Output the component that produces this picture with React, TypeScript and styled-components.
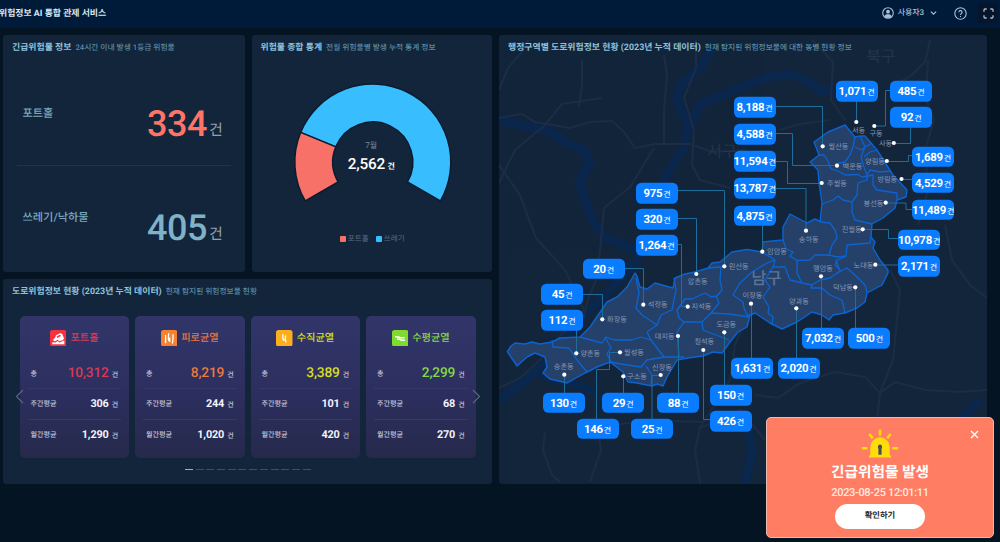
import React from "react";
import styled, { createGlobalStyle } from "styled-components";

const GlobalStyle = createGlobalStyle`
  * { box-sizing: border-box; }
  html, body { margin: 0; padding: 0; background: #051423; overflow: hidden; }
  body, button { font-family: Roboto, "Noto Sans CJK KR", sans-serif; text-rendering: geometricPrecision; }
`;

const Page = styled.div`
  width: 1000px;
  height: 542px;
  display: flex;
  flex-direction: column;
  background: #051423;
  color: #fff;
`;

const Header = styled.header`
  height: 28px;
  flex: none;
  display: flex;
  align-items: center;
  justify-content: space-between;
  background: #001b3a;
  padding: 0 2px 2px 0;
`;

const Brand = styled.h1`
  margin: 2px 0 0 -1px;
  font-size: 8.9px;
  line-height: 12px;
  font-weight: 700;
  white-space: nowrap;
  color: #dbe8f5;
`;

const HeaderTools = styled.div`
  display: flex;
  align-items: center;
  color: #a9bfd6;
`;

const UserMenu = styled.div`
  display: flex;
  align-items: center;
  gap: 4px;
  font-size: 8px;
  line-height: 12px;
  letter-spacing: -0.1px;
  font-weight: 500;
  margin-right: 17px;
`;

const UserName = styled.span`
  margin-right: 2px;
`;

const FullscreenButton = styled.span`
  display: flex;
  align-items: center;
  justify-content: center;
  width: 20px;
  height: 20px;
  margin-left: 11px;
  background: #06152a;
  border-radius: 2px;
`;

const Main = styled.main`
  display: grid;
  grid-template-columns: 489px 488px;
  column-gap: 7px;
  padding: 7px 0 0 3px;
  height: 456px;
`;

const LeftColumn = styled.div`
  display: grid;
  grid-template-rows: 237px 205px;
  row-gap: 7px;
`;

const TopRow = styled.div`
  display: grid;
  grid-template-columns: 242px 240.5px;
  column-gap: 6.5px;
`;

const Panel = styled.section`
  position: relative;
  height: 100%;
  display: flex;
  flex-direction: column;
  background: #12253a;
  border-radius: 3px;
  overflow: hidden;
`;

const PanelHead = styled.div`
  position: relative;
  display: flex;
  align-items: center;
  gap: 4px;
  padding: 6px 0 0 9px;
  height: 19px;
  flex: none;
  white-space: nowrap;
`;

const PanelTitle = styled.h2`
  margin: 0;
  font-size: 8.9px;
  line-height: 12px;
  font-weight: 700;
  color: #8fc2dc;
`;

const PanelNote = styled.span`
  font-size: 7.75px;
  line-height: 12px;
  font-weight: 500;
  color: #5a8ca5;
`;

const HazardBlock = styled.div<{ $height: number; $divided?: boolean }>`
  display: flex;
  justify-content: space-between;
  height: ${(p) => p.$height}px;
  margin: 0 14px;
  padding: 0 8.5px 0 5.5px;
  border-bottom: ${(p) => (p.$divided ? "1px solid #1f3154" : "0")};
`;

const HazardName = styled.span<{ $top: number }>`
  margin-top: ${(p) => p.$top}px;
  font-size: 11.2px;
  line-height: 16px;
  font-weight: 500;
  color: #7aa9c0;
`;

const HazardValue = styled.span<{ $color: string; $top: number }>`
  margin-top: ${(p) => p.$top}px;
  font-size: 36px;
  line-height: 40px;
  letter-spacing: -0.4px;
  font-weight: 500;
  color: ${(p) => p.$color};
`;

const HazardUnit = styled.small`
  position: relative;
  top: -1px;
  margin-left: 2px;
  font-size: 15px;
  font-weight: 400;
  color: #929fae;
`;

const ChartBox = styled.div`
  position: relative;
  height: 134px;
  margin-top: 20px;
  display: flex;
  justify-content: center;
`;

const ChartCenter = styled.div`
  position: absolute;
  left: 0;
  right: 1px;
  top: 66px;
  text-align: center;
  font-size: 8px;
  line-height: 12px;
  color: #7c8ea2;
`;

const ChartTotal = styled.div`
  font-size: 15.3px;
  line-height: 25px;
  letter-spacing: -0.15px;
  font-weight: 500;
  color: #fff;
`;

const ChartUnit = styled.small`
  margin-left: 2.5px;
  font-size: 8px;
  font-weight: 700;
`;

const Legend = styled.div`
  display: flex;
  justify-content: center;
  gap: 7px;
  margin: 25px 0 0 1px;
`;

const LegendItem = styled.span<{ $color: string }>`
  display: flex;
  align-items: center;
  gap: 2px;
  font-size: 7.6px;
  line-height: 12px;
  color: #5a6d83;
  &::before {
    content: "";
    width: 6px;
    height: 6px;
    border-radius: 1px;
    background: ${(p) => p.$color};
  }
`;

const Carousel = styled.div`
  position: relative;
  display: grid;
  grid-template-columns: repeat(4, 109.5px);
  column-gap: 6px;
  margin: 18px 0 0 16.5px;
`;

const StatCard = styled.article`
  height: 142px;
  padding: 14px 8px 0;
  border-radius: 5px;
  background: linear-gradient(#313569, #2c2f5e 55%, #26294b);
`;

const StatHead = styled.div<{ $color: string }>`
  display: flex;
  align-items: center;
  justify-content: center;
  gap: 4px;
  height: 16px;
  margin-bottom: 13px;
  font-size: 10.2px;
  line-height: 16px;
  font-weight: 500;
  color: ${(p) => p.$color};
`;

const StatName = styled.span`
  margin-top: 2px;
`;

const StatRow = styled.div`
  display: flex;
  align-items: center;
  justify-content: space-between;
  height: 30.4px;
  padding: 0 3px;
  border-bottom: 1px solid #36396a;
  font-size: 7.1px;
  color: #c3c6da;
  font-weight: 500;
  &:last-child {
    border-bottom: 0;
  }
`;

const StatValue = styled.span<{ $color?: string }>`
  margin-top: 1px;
  font-size: ${(p) => (p.$color ? 13.7 : 10.9)}px;
  line-height: 16px;
  letter-spacing: -0.15px;
  font-weight: ${(p) => (p.$color ? 500 : 700)};
  color: ${(p) => p.$color ?? "#f2f4fb"};
`;

const StatUnit = styled.small`
  margin-left: 3px;
  font-size: 7px;
  font-weight: 500;
  color: #c3c6da;
`;

const Arrow = styled.span<{ $side: "left" | "right" }>`
  position: absolute;
  top: 73px;
  ${(p) => (p.$side === "left" ? "left: -5px;" : "left: 452px;")}
  display: flex;
`;

const Pager = styled.div`
  display: flex;
  gap: 2.7px;
  margin: 10.5px 0 0 182px;
`;

const PagerBar = styled.span<{ $active?: boolean }>`
  width: 8px;
  height: 1.5px;
  background: ${(p) => (p.$active ? "#9fb1c0" : "#3c5064")};
`;

const MapCanvas = styled.div`
  position: absolute;
  inset: 0;
`;

const CountPill = styled.span`
  position: absolute;
  width: 42px;
  height: 20.5px;
  transform: translate(-50%, -50%);
  display: flex;
  align-items: baseline;
  justify-content: center;
  border-radius: 5.5px;
  background: #0a7cff;
  font-size: 11.4px;
  line-height: 20px;
  letter-spacing: -0.25px;
  font-weight: 700;
  white-space: nowrap;
`;

const PillUnit = styled.small`
  margin-left: 1px;
  font-size: 8px;
  line-height: 12px;
  font-weight: 400;
`;

const Alert = styled.aside`
  position: absolute;
  left: 766px;
  top: 417px;
  width: 228px;
  height: 120.5px;
  display: flex;
  flex-direction: column;
  align-items: center;
  padding-top: 11px;
  border: 1px solid #ecb9b2;
  border-radius: 5px;
  background: #ff7d62;
`;

const AlertTitle = styled.strong`
  margin-top: 4px;
  font-size: 14.7px;
  line-height: 20px;
  font-weight: 700;
`;

const AlertTime = styled.time`
  margin-top: 4px;
  font-size: 11px;
  line-height: 14px;
  letter-spacing: -0.32px;
  font-weight: 500;
  color: #ffe9e2;
`;

const AlertButton = styled.button`
  margin-top: 4px;
  width: 90px;
  height: 24.5px;
  border: 0;
  padding: 0;
  border-radius: 13px;
  background: #fff;
  font-size: 8.3px;
  line-height: 16px;
  font-weight: 700;
  color: #222;
`;

const CloseMark = styled.span`
  position: absolute;
  right: 14px;
  top: 12px;
  display: flex;
`;

/* ---------- data ---------- */

type Icon = "car" | "fatigue" | "vertical" | "horizontal";

const stats: { name: string; color: string; tile: string; icon: Icon; total: string; week: string; month: string }[] = [
  { name: "포트홀", color: "#d93a55", tile: "#f5333c", icon: "car", total: "10,312", week: "306", month: "1,290" },
  { name: "피로균열", color: "#f0783a", tile: "#f58230", icon: "fatigue", total: "8,219", week: "244", month: "1,020" },
  { name: "수직균열", color: "#d8e020", tile: "#fcae1c", icon: "vertical", total: "3,389", week: "101", month: "420" },
  { name: "수평균열", color: "#86d944", tile: "#7fdc2e", icon: "horizontal", total: "2,299", week: "68", month: "270" },
];

const pills: [string, number, number][] = [
  ["8,188", 754.5, 107], ["4,588", 754.5, 134], ["11,594", 754.5, 161], ["13,787", 754.5, 188], ["4,875", 754.5, 215.5],
  ["975", 657, 193], ["320", 657, 219], ["1,264", 656.5, 245], ["20", 603.5, 268.5], ["45", 562, 294], ["112", 562, 320],
  ["130", 563.5, 402.5], ["29", 623, 402.5], ["88", 678, 402.5], ["146", 597.5, 428.5], ["25", 652, 428.5],
  ["150", 730.5, 395], ["426", 730.5, 421], ["1,631", 752.2, 368], ["2,020", 798.5, 368], ["7,032", 823, 338], ["500", 869.3, 338],
  ["1,071", 856.5, 91], ["485", 911, 91], ["92", 911, 117], ["1,689", 933, 156.5], ["4,529", 933, 182.5],
  ["11,489", 933, 209.5], ["10,978", 919, 239.5], ["2,171", 919, 266],
];

/* name, dot x, dot y, label centre x, label centre y */
const towns: [string, number, number, number, number][] = [
  ["서동", 856.3, 122, 858.5, 130], ["구동", 874.3, 126, 876, 133], ["사동", 893.8, 143, 885.5, 143.3],
  ["월산동", 822.7, 146.3, 838.5, 146.3], ["백운동", 837, 165.7, 852.5, 166], ["양림동", 886.8, 161, 875, 161.3],
  ["방림동", 901.5, 179, 887.3, 179.5], ["주월동", 821.7, 183, 837, 183.5], ["봉선동", 885.7, 202.7, 873.5, 203],
  ["진월동", 862.7, 229.3, 851.7, 229.5], ["송하동", 806, 230.7, 808.7, 239], ["노대동", 875.3, 264.7, 863.5, 265],
  ["행암동", 821, 276.3, 823, 268], ["덕남동", 855.3, 287.3, 843, 287], ["양과동", 796.3, 308.3, 799, 301],
  ["이장동", 751, 303.7, 752.5, 295.7], ["임암동", 762.3, 251.7, 777, 251.5], ["원산동", 724.3, 266.3, 738.7, 266.7],
  ["압촌동", 696.3, 274, 697.7, 281.7], ["지석동", 687.7, 306.7, 701.5, 306.5], ["도금동", 724.3, 332.3, 726.3, 324],
  ["칠석동", 703.3, 350, 704.3, 341.7], ["대지동", 678, 336, 664.7, 336], ["석정동", 643.3, 304.7, 657.7, 304.7],
  ["화장동", 602.3, 319.3, 617, 319.5], ["양촌동", 576.3, 353.3, 590.3, 353.3], ["월성동", 620, 352.3, 634, 352],
  ["승촌동", 564.3, 374.7, 563.7, 366.7], ["구소동", 623.3, 376.3, 637, 376.5], ["신장동", 660.7, 375, 662, 367.3],
];

const leaders = [
  "M776 106.5H822.5V146", "M776 133.5H792.5V165.5H837", "M776 161.5H787.5V183.5H821", "M776 188.5H806V230", "M762.5 226V251",
  "M678 190.5H724.5V266", "M678 218.5H696.5V274", "M678 244.5H681.5V306.5H687", "M624 268.5H643.5V304", "M583 294.5H602.5V319",
  "M576.5 330V353", "M564.5 375V393", "M620 352.5H609.5V369.5H596.5V419", "M623.5 376V393", "M660 375.5H652V419", "M678.5 336V393",
  "M724.5 332V386", "M703.5 350V419.5H710", "M751.5 304V359", "M796.5 308V359", "M821.5 276V329", "M855.5 287V329",
  "M856.5 101V122", "M890 90.5H885.5V126H874", "M910.5 127V143.5H894", "M912 155.5H908.5V161.5H887", "M901 179.5H912",
  "M912 209.5H906V203H886", "M898 238.5H888.5V229.5H863", "M875 265H898",
];

const outline =
  "M507.3 351.7L511 346L515 343L525 344L532 342L540 344L552 342L560 338L580 337L590 327L607 302L617 297L627 287L635 273L637 276L640 287L647 289L655 283L673 288L675 278L680 276L685 274L695 272L708 268L712 263L720 262L732 252L747 249.500L762 252L763 242L772 241L783 240L783 227L790 214L807 223L815 219L820 221.500L822 203L819 183L818 170L810 162L819 155L814 142L828 132L845 125L855 137L860 136L865 136L877 150L893 175L907 190L906 197L897 200L895 208L883 218L872 224L871 237L875 242L873 248L880 260L888 270L888 273L882 285L867 293L865 302L857 308L845 313L833 315L829 320L822 315L812 312L797 322L782 329L770 323L755 313L750 315L747 327L738 332L730 342L722 353L713 352L703 356L688 358L677 360L667 377L663 386L657 384L652 386L637 383L628 382L623 372L610 362L597 367L585 373L567 383L550 379L543 373L547 367L545 357L535 353L527 357L517 366Z";

const borders = [
  "M855 137L853 147L850 155L845 162L835 164M819 155L824 155L828 161L831 169L838 171L845 175L858 174.500L862 177L873 175",
  "M860 136L865 147L861 157L864 167L867 175M855 147L861 150L865 147L872 143M864 157L870 152L877 150M867 175L870 170L880 172L891 171",
  "M873 175L873 185L877 190L890 192L897 193L897 200M867 176L867 180L858 183L857 195L852 202L852 212L855 220L872 224",
  "M822 204L833 200L838 196L843 200L852 202M820 222L830 223L835 230L837 238L832 245L829 255L837 257L846 256L847 245L870 243L871 237",
  "M846 256.500L837 260L835 265L841 271L836 274M829 255L815 255L810 260L797 260.500L790 256L793 252L786 249L783 240M797 260.500L797 273L802 283L812 285L820 280L830 278L840 271L836 260",
  "M812 285L811 288L822 288L830 295L842 300L845 313M840 271L847 268L857 277L865 285L867 293",
  "M762 252L775 260L773 267L785 267L790 280L802 283M775 260L767 263L752 272L740 283L733 295L743 302L744 308L747 315L750 315",
  "M773 267L765 280L770 287L763 297L769 307L768 313L773 317L772 325M708 268L721 267L720 280L722 290L717 296L711 297L705 293L692 299L685 299L678 309",
  "M716 296L719 303L711 313L702 322L684 322L679 318L677 310L685 299M711 313L729 314L749 317M702 322L703 330L716 335L729 340M684 322L677 332L679 357",
  "M674 278L676 290L672 310L661 315L657 325L647 332L651 340L664 357L684 357M636 278L639 293L636 308L642 315L657 325",
  "M580 337L602 343L606 337L614 340L632 340L641 337L651 340M605 337L611 348L607 354L611 362L621 364L641 367L647 360L664 357",
  "M646 366L652 375L651 386M552 340L553 347L569 348L577 360L587 372",
];

const rivers = [
  "M499 120L525 126L548 130L566 143L584 150L590 162L579 182L585 198L592 220L606 238L625 245L640 255",
  "M714 45L700 68L680 85L677 100L688 125L684 148L668 172L660 190",
  "M690 125L700 104L716 98L740 88L765 78L790 74L806 80L822 92L833 88",
  "M640 255L622 278L600 300L580 318L560 345L540 368L520 385L499 400",
  "M540 375L575 384L594 392M748 430L752 450L745 484M980 400L965 415L958 430",
];

const roads = [
  "M499 118L522 114L535 122L570 128L590 122L612 121L624 132L635 148L655 144L690 144L712 152L745 150",
  "M582 60L582 85L579 107M499 183L515 150L545 125L562 104L602 98M499 90L508 68L522 52L528 40",
  "M664 55L667 75L664 110L664 144M696 40L696 68L684 98L694 130L692 165L700 180L730 188",
  "M654 148L630 187L604 208L600 250L596 280L588 300L583 318M499 165L520 195L536 238L565 270L584 310L565 330L540 360L520 378L499 388",
  "M812 40L833 62L831 100L845 120M930 40L925 62L912 75L895 85M928 60L926 100L934 120L925 150L928 190L918 225",
  "M780 130L800 124L830 120M945 225L952 260L970 285L987 298M890 270L900 290L893 360L880 393L876 430",
  "M755 395L778 398L800 383L835 372L865 377L880 393L895 382L925 390L960 392L987 390M750 310L735 345L730 380L700 428L695 450L700 484",
  "M545 432L543 450L552 475L560 482M598 430L601 450L590 482M615 425L650 420L700 422L728 415M700 428L740 410L757 430L765 440",
];

/* ---------- drawings ---------- */

const DONUT = { cx: 120.8, cy: 73, outer: 78, inner: 40 };

function ring(from: number, to: number) {
  const at = (r: number, deg: number) => {
    const a = (deg * Math.PI) / 180;
    return `${(DONUT.cx + r * Math.cos(a)).toFixed(2)} ${(DONUT.cy + r * Math.sin(a)).toFixed(2)}`;
  };
  const big = to - from > 180 ? 1 : 0;
  const { outer, inner } = DONUT;
  return `M${at(outer, from)}A${outer} ${outer} 0 ${big} 1 ${at(outer, to)}L${at(inner, to)}A${inner} ${inner} 0 ${big} 0 ${at(inner, from)}Z`;
}

function Donut() {
  return (
    <svg width="240.5" height="134" viewBox="0 -15 240.500 134">
      <path d={ring(202.3, 390)} fill="#38bdff" stroke="#0c1c30" strokeWidth="1.5" />
      <path d={ring(150, 202.3)} fill="#f87168" stroke="#0c1c30" strokeWidth="1.5" />
    </svg>
  );
}

function StatIcon({ kind, tile }: { kind: Icon; tile: string }) {
  return (
    <svg width="16.500" height="16.500" viewBox="0 0 16.5 16.5">
      <rect width="16.5" height="16.5" rx="2.6" fill={tile} />
      {kind === "car" && (
        <g>
          <path d="M2.200 12.200L5.500 12.500L7.500 11L9.500 12.500L14.300 10.500V14.300H2.200Z" fill="#fff" />
          <path d="M3.300 9.200L5 8L6 5.200L10.200 3.300L12 3.800L13.200 6.200L14 8.500L12.800 10.300L9.200 11.300L7.500 9.800L5.200 11.300L3.500 10.800Z" fill="#fff" />
          <path d="M6.700 6.600L9.900 4.800L11.200 6L7 7.900Z" fill={tile} />
        </g>
      )}
      {kind === "fatigue" && (
        <path d="M4.600 5V13.200M7.600 3.300L7.400 9.500L8 11M8.700 7.500V12M12 4.200V9.500L11.300 13.500" fill="none" stroke="#fff" strokeWidth="1.300" />
      )}
      {kind === "vertical" && (
        <path d="M7 4L6.800 8L7.600 10.800M9.700 5.500L9.200 8.500L10 12.500M7.300 9.500L9.500 10" fill="none" stroke="#fff" strokeWidth="1.300" />
      )}
      {kind === "horizontal" && (
        <path d="M3 6.800L6.500 7L8.500 7.700H12.500M5 9L7.500 9.200L9.500 10.200H13" fill="none" stroke="#fff" strokeWidth="1.400" />
      )}
    </svg>
  );
}

function Siren() {
  return (
    <svg width="38" height="29" viewBox="0 0 38 29">
      <g stroke="#ffdc0a" strokeWidth="2.600" strokeLinecap="butt">
        <path d="M19 0.500V6.500M8.300 5L11.800 9.300M29.700 5L26.200 9.300M0.800 19.200H6.500M31.200 19.200H37.200" />
      </g>
      <path d="M9.300 26.500V18A9.700 9.700 0 0 1 28.700 18V26.500H30V28.500H8V26.500Z" fill="#ffdc0a" />
      <path d="M19 15.600a2.100 2.100 0 0 1 2.100 2.100c0 1-.5 1.500-.5 2.300v5.800h-3.200V20c0-.8-.5-1.300-.5-2.300A2.100 2.100 0 0 1 19 15.600Z" fill="#45505c" />
    </svg>
  );
}

function MapDrawing() {
  return (
    <svg width="488" height="449" viewBox="499 35 488 449">
      <g fill="none" stroke="#06295a" strokeWidth="9" strokeLinejoin="round" opacity="0.6">
        {rivers.map((d) => <path key={d} d={d} />)}
      </g>
      <g fill="none" stroke="#1b2d44" strokeWidth="2.2" strokeLinejoin="round">
        {roads.map((d) => <path key={d} d={d} />)}
      </g>
      <g fill="#22354b" fontSize="16" textAnchor="middle">
        <text x="881" y="62">북구</text>
        <text x="722" y="157">서구</text>
      </g>
      <path d={outline} fill="#25416a" stroke="#0b63d2" strokeWidth="1.4" strokeLinejoin="round" />
      <g fill="none" stroke="#0b63d2" strokeWidth="1.3" strokeLinejoin="round">
        {borders.map((d) => <path key={d} d={d} />)}
      </g>
      <text x="766.5" y="284" fill="#5a7396" fontSize="16.500" fontWeight="500" textAnchor="middle">남구</text>
      <g fill="none" stroke="#1f6d9b" strokeWidth="1">
        {leaders.map((d) => <path key={d} d={d} />)}
      </g>
      {towns.map(([name, dx, dy, lx, ly]) => (
        <g key={name}>
          <text x={lx} y={ly + 2.6} fill="#8798b3" fontSize="7.2" textAnchor="middle">{name}</text>
          <circle cx={dx} cy={dy} r="2.1" fill="#fff" />
        </g>
      ))}
    </svg>
  );
}

/* ---------- page ---------- */

export default function App() {
  return (
    <Page>
      <GlobalStyle />
      <Header>
        <Brand>위험정보 AI 통합 관제 서비스</Brand>
        <HeaderTools>
          <UserMenu>
            <svg width="12" height="12" viewBox="0 0 12 12">
              <circle cx="6" cy="6" r="5.300" fill="none" stroke="currentColor" strokeWidth="1.100" />
              <circle cx="6" cy="4.700" r="1.900" fill="currentColor" />
              <path d="M2.300 9.300C3.200 7.600 4.600 7.300 6 7.300S8.800 7.600 9.700 9.300C8.600 10.600 7.400 11 6 11S3.400 10.600 2.300 9.300Z" fill="currentColor" />
            </svg>
            <UserName>사용자3</UserName>
            <svg width="7" height="6" viewBox="0 0 7 6">
              <path d="M0.900 1.600L3.500 4.200L6.100 1.600" fill="none" stroke="currentColor" strokeWidth="1.200" />
            </svg>
          </UserMenu>
          <svg width="13" height="13" viewBox="0 0 13 13" fill="none" stroke="currentColor">
            <circle cx="6.500" cy="6.500" r="5.700" strokeWidth="1.100" />
            <path d="M4.900 5.300A1.600 1.600 0 1 1 7.300 6.600C6.700 7 6.500 7.200 6.500 7.900M6.500 8.900V10" strokeWidth="1.100" />
          </svg>
          <FullscreenButton>
            <svg width="11" height="11" viewBox="0 0 11 11" fill="none" stroke="currentColor" strokeWidth="1.300">
              <path d="M1 3.700V2Q1 1 2 1H3.700M7.300 1H9Q10 1 10 2V3.700M10 7.300V9Q10 10 9 10H7.300M3.700 10H2Q1 10 1 9V7.300" />
            </svg>
          </FullscreenButton>
        </HeaderTools>
      </Header>
      <Main>
        <LeftColumn>
          <TopRow>
            <Panel>
              <PanelHead>
                <PanelTitle>긴급위험물 정보</PanelTitle>
                <PanelNote>24시간 이내 발생 1등급 위험물</PanelNote>
              </PanelHead>
              <HazardBlock $height={112} $divided>
                <HazardName $top={52}>포트홀</HazardName>
                <HazardValue $color="#ff7466" $top={50}>334<HazardUnit>건</HazardUnit></HazardValue>
              </HazardBlock>
              <HazardBlock $height={104}>
                <HazardName $top={44}>쓰레기/낙하물</HazardName>
                <HazardValue $color="#7fb2c9" $top={42}>405<HazardUnit>건</HazardUnit></HazardValue>
              </HazardBlock>
            </Panel>
            <Panel>
              <PanelHead>
                <PanelTitle>위험물 종합 통계</PanelTitle>
                <PanelNote>전월 위험물별 발생 누적 통계 정보</PanelNote>
              </PanelHead>
              <ChartBox>
                <Donut />
                <ChartCenter>
                  7월
                  <ChartTotal>2,562<ChartUnit>건</ChartUnit></ChartTotal>
                </ChartCenter>
              </ChartBox>
              <Legend>
                <LegendItem $color="#f87168">포트홀</LegendItem>
                <LegendItem $color="#38bdff">쓰레기</LegendItem>
              </Legend>
            </Panel>
          </TopRow>
          <Panel>
            <PanelHead>
              <PanelTitle>도로위험정보 현황 (2023년 누적 데이터)</PanelTitle>
              <PanelNote>현재 탐지된 위험정보물 현황</PanelNote>
            </PanelHead>
            <Carousel>
              {stats.map((s) => (
                <StatCard key={s.name}>
                  <StatHead $color={s.color}>
                    <StatIcon kind={s.icon} tile={s.tile} />
                    <StatName>{s.name}</StatName>
                  </StatHead>
                  <StatRow>
                    총<StatValue $color={s.color}>{s.total}<StatUnit>건</StatUnit></StatValue>
                  </StatRow>
                  <StatRow>
                    주간평균<StatValue>{s.week}<StatUnit>건</StatUnit></StatValue>
                  </StatRow>
                  <StatRow>
                    월간평균<StatValue>{s.month}<StatUnit>건</StatUnit></StatValue>
                  </StatRow>
                </StatCard>
              ))}
              <Arrow $side="left">
                <svg width="9" height="15" viewBox="0 0 9 15"><path d="M8 1L1.500 7.500L8 14" fill="none" stroke="#5b6480" strokeWidth="1.200" /></svg>
              </Arrow>
              <Arrow $side="right">
                <svg width="9" height="15" viewBox="0 0 9 15"><path d="M1 1L7.500 7.500L1 14" fill="none" stroke="#5b6480" strokeWidth="1.200" /></svg>
              </Arrow>
            </Carousel>
            <Pager>
              {Array.from({ length: 12 }, (_, i) => <PagerBar key={i} $active={i === 0} />)}
            </Pager>
          </Panel>
        </LeftColumn>
        <Panel>
          <MapCanvas>
            <MapDrawing />
            {pills.map(([count, x, y]) => (
              <CountPill key={count} style={{ left: x - 499, top: y - 35 }}>
                {count}<PillUnit>건</PillUnit>
              </CountPill>
            ))}
          </MapCanvas>
          <PanelHead>
            <PanelTitle>행정구역별 도로위험정보 현황 (2023년 누적 데이터)</PanelTitle>
            <PanelNote>현재 탐지된 위험정보물에 대한 동별 현황 정보</PanelNote>
          </PanelHead>
        </Panel>
      </Main>
      <Alert>
        <Siren />
        <AlertTitle>긴급위험물 발생</AlertTitle>
        <AlertTime>2023-08-25 12:01:11</AlertTime>
        <AlertButton>확인하기</AlertButton>
        <CloseMark>
          <svg width="9" height="9" viewBox="0 0 9 9"><path d="M1 1L8 8M8 1L1 8" stroke="#fff" strokeWidth="1.300" /></svg>
        </CloseMark>
      </Alert>
    </Page>
  );
}
